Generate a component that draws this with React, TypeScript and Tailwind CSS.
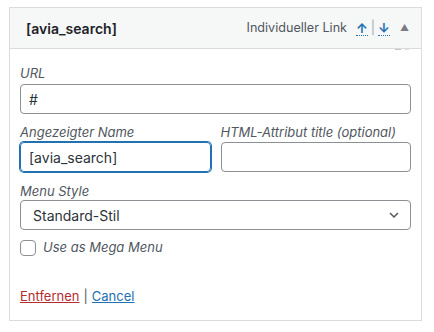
const font = { fontFamily: "Inter, 'Liberation Sans', Arial, sans-serif" };

function Label({ children }: { children: React.ReactNode }) {
  return (
    <div className="h-[18px] text-[13px] leading-[18px] italic text-[#50575e]">
      {children}
    </div>
  );
}

export default function App() {
  return (
    <div className="w-[434px] h-[332px] bg-white pt-[7px] pl-[9px]" style={font}>
      <div className="w-[413px] border border-[#dcdcde]">
        {/* header */}
        <div className="relative h-[41px] bg-[#f6f7f7] border-b border-[#dcdcde] flex items-center pl-[16px] pr-[12px]">
          <span className="text-[14px] font-semibold text-[#1d2327]">[avia_search]</span>
          <span className="ml-auto text-[12.6px] text-[#50575e]">Individueller Link</span>
          <span className="ml-[9px] flex items-center text-[13px] text-[#2271b1]">
            <span className="border-b border-dotted border-[#2271b1] leading-[14px] font-bold">↑</span>
            <span className="mx-[3px] text-[#a7aaad]">|</span>
            <span className="border-b border-dotted border-[#2271b1] leading-[14px] font-bold">↓</span>
          </span>
          <span className="ml-[10px] text-[9px] text-[#787c82]">▲</span>
          <span className="absolute right-[12px] bottom-[-2px] flex gap-[4px]">
            <span className="w-[6px] h-[1px] bg-[#c3c4c7]" />
            <span className="w-[4px] h-[1px] bg-[#dcdcde]" />
          </span>
        </div>

        {/* body */}
        <div className="px-[10px] pt-[15px] pb-[15px]">
          <Label>URL</Label>
          <div className="mt-[2px] h-[30px] rounded-[4px] border border-[#8c8f94] px-[8px] flex items-center text-[14px] text-[#2c3338]">
            #
          </div>

          <div className="mt-[9px] grid grid-cols-2 gap-[10px]">
            <div>
              <Label>Angezeigter Name</Label>
              <div className="mt-[1px] h-[30px] rounded-[4px] border border-[#2271b1] shadow-[0_0_0_1px_#2271b1] px-[8px] flex items-center text-[14px] text-[#2c3338]">
                [avia_search]
              </div>
            </div>
            <div>
              <Label>HTML-Attribut title (optional)</Label>
              <div className="mt-[1px] h-[30px] rounded-[4px] border border-[#8c8f94]" />
            </div>
          </div>

          <div className="mt-[10px]">
            <Label>Menu Style</Label>
            <div className="h-[30px] rounded-[4px] border border-[#8c8f94] pl-[12px] pr-[8px] flex items-center text-[14px] text-[#2c3338]">
              Standard-Stil
              <svg className="ml-auto" width="16" height="16" viewBox="0 0 16 16" fill="none">
                <path d="M4 6l4 4 4-4" stroke="#50575e" strokeWidth="1.5" />
              </svg>
            </div>
          </div>

          <div className="mt-[8px] flex items-center">
            <span className="w-[16px] h-[16px] rounded-[4px] border border-[#8c8f94] bg-white" />
            <span className="ml-[7px] text-[13px] italic text-[#50575e]">Use as Mega Menu</span>
          </div>

          <div className="mt-[29px] text-[13px] leading-[18px]">
            <span className="text-[#b32d2e] underline">Entfernen</span>
            <span className="mx-[4px] text-[#50575e]">|</span>
            <span className="text-[#2271b1] underline">Cancel</span>
          </div>
        </div>
      </div>
    </div>
  );
}
